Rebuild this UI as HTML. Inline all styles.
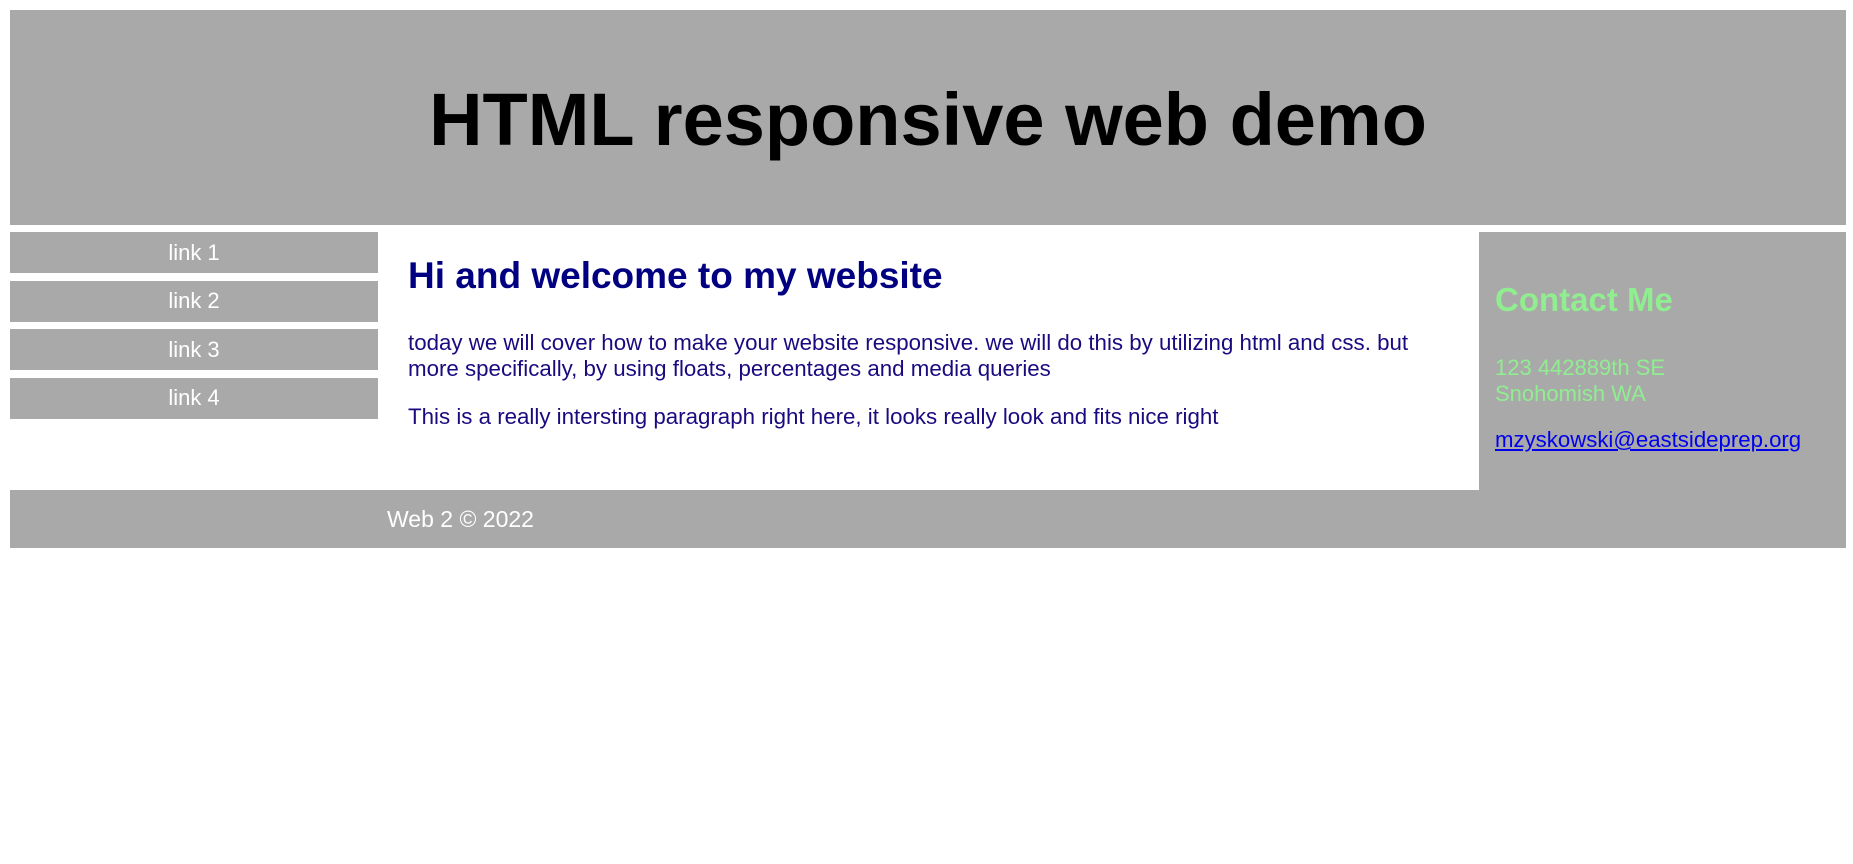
<!DOCTYPE html>
<html><head><meta charset="utf-8"><style>
body{margin:0;background:#fff;font-family:"Liberation Sans",Arial,sans-serif;width:1853px;height:864px;position:relative;overflow:hidden}
.g{position:absolute;background:#a9a9a9}
.t{position:absolute;white-space:nowrap;line-height:1}
</style></head><body>
<div class="g" style="left:10px;top:10px;width:1836px;height:215px"></div>
<div class="t" style="left:10px;width:1836px;text-align:center;top:83px;font-size:74px;font-weight:bold;color:#000">HTML responsive web demo</div>

<div class="g" style="left:10px;top:232px;width:368px;height:41px"></div>
<div class="g" style="left:10px;top:281px;width:368px;height:41px"></div>
<div class="g" style="left:10px;top:329px;width:368px;height:41px"></div>
<div class="g" style="left:10px;top:378px;width:368px;height:41px"></div>
<div class="t" style="left:10px;width:368px;text-align:center;top:242px;font-size:22px;color:#fff">link 1</div>
<div class="t" style="left:10px;width:368px;text-align:center;top:290px;font-size:22px;color:#fff">link 2</div>
<div class="t" style="left:10px;width:368px;text-align:center;top:339px;font-size:22px;color:#fff">link 3</div>
<div class="t" style="left:10px;width:368px;text-align:center;top:387px;font-size:22px;color:#fff">link 4</div>

<div class="t" style="left:408px;top:257px;font-size:37px;font-weight:bold;color:#000080">Hi and welcome to my website</div>
<div class="t" style="left:408px;top:330px;font-size:22.3px;line-height:26px;color:#1a0a80;white-space:normal;width:1030px">today we will cover how to make your website responsive. we will do this by utilizing html and css. but more specifically, by using floats, percentages and media queries</div>
<div class="t" style="left:408px;top:406px;font-size:22.3px;color:#1a0a80">This is a really intersting paragraph right here, it looks really look and fits nice right</div>

<div class="g" style="left:1479px;top:232px;width:367px;height:258px"></div>
<div class="t" style="left:1495px;top:283px;font-size:33px;font-weight:bold;color:#90ee90">Contact Me</div>
<div class="t" style="left:1495px;top:355px;font-size:22px;line-height:26px;color:#90ee90">123 442889th SE<br>Snohomish WA</div>
<div class="t" style="left:1495px;top:429px;font-size:22.2px;color:#0000ee;text-decoration:underline">mzyskowski@eastsideprep.org</div>

<div class="g" style="left:10px;top:490px;width:1836px;height:58px"></div>
<div class="t" style="left:387px;top:508px;font-size:23px;color:#fff">Web 2 © 2022</div>
</body></html>
